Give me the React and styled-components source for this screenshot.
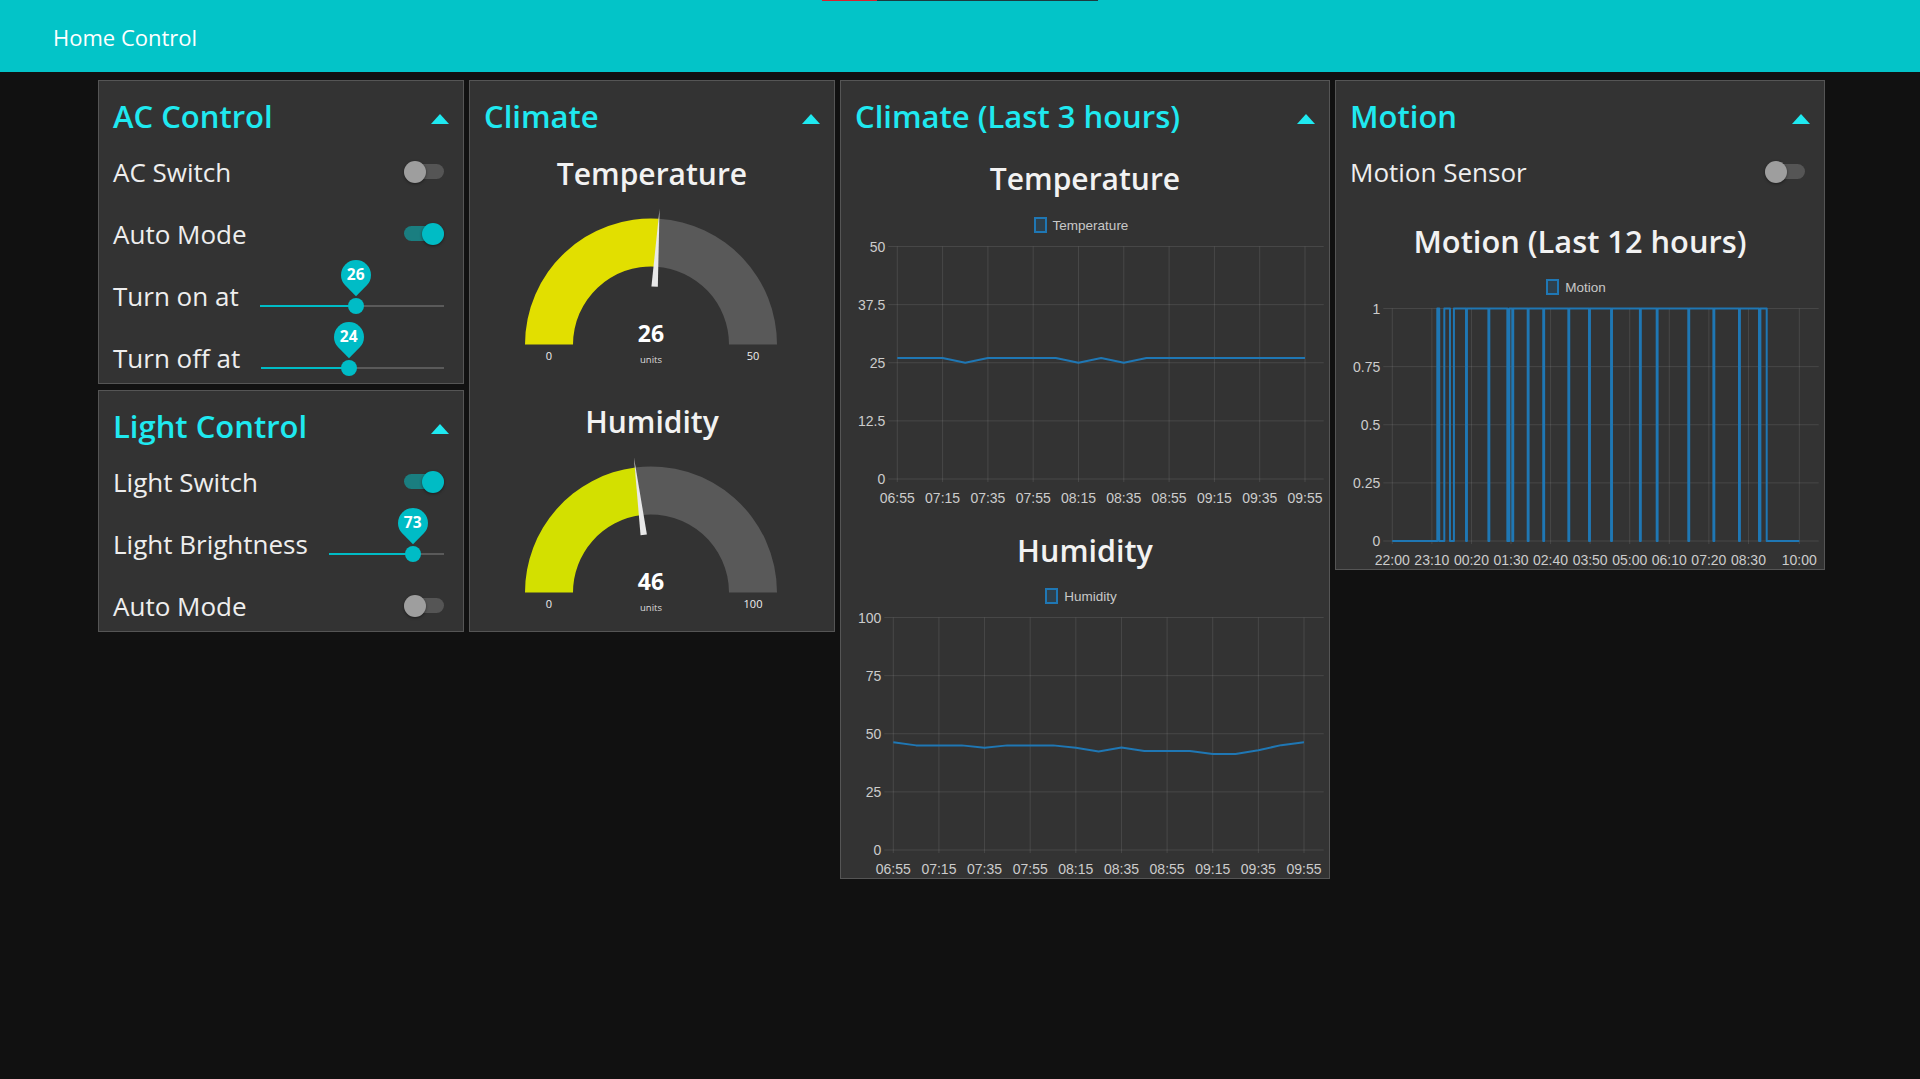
import React from "react";
import styled, { createGlobalStyle } from "styled-components";

const GlobalStyle = createGlobalStyle`
  html, body {
    margin: 0;
    padding: 0;
    background: #111111;
  }
  body {
    font-family: "Open Sans", "Noto Sans", sans-serif;
    color: #eeeeee;
  }
  * {
    box-sizing: border-box;
  }
`;

const Page = styled.div`
  min-height: 1079px;
  background: #111111;
`;

const TopBar = styled.header`
  position: relative;
  height: 72px;
  background: #03c4c8;
  display: flex;
  align-items: center;
  padding: 2px 0 0 53px;
  color: #ffffff;
  font-size: 22px;
`;

const Progress = styled.div`
  position: absolute;
  top: 0;
  left: 50%;
  transform: translateX(-50%);
  width: 276px;
  height: 1px;
  display: flex;
  background: #1d3b3f;
`;

const ProgressFill = styled.div`
  width: 55px;
  background: #d8232f;
`;

const Board = styled.main`
  display: flex;
  justify-content: center;
  align-items: flex-start;
  gap: 5px;
  padding: 8px 0 0 3px;
`;

const Column = styled.div`
  display: flex;
  flex-direction: column;
  gap: 6px;
  width: ${(p) => p.$w}px;
`;

const Card = styled.section`
  background: #333333;
  border: 1px solid #555555;
  padding-bottom: ${(p) => p.$pb}px;
`;

const GroupHeader = styled.div`
  height: 65px;
  padding: 6px 14px 0;
  display: flex;
  align-items: center;
  justify-content: space-between;
`;

const GroupTitle = styled.h2`
  margin: 0;
  font-size: 31px;
  font-weight: 600;
  line-height: 1;
  color: #1fe9f0;
`;

const Caret = styled.span`
  width: 0;
  height: 0;
  margin-top: 4px;
  border-left: 9.5px solid transparent;
  border-right: 9.5px solid transparent;
  border-bottom: 10px solid #1fe9f0;
`;

const Body = styled.div`
  display: flex;
  flex-direction: column;
  gap: 12px;
`;

const Row = styled.div`
  height: 50px;
  display: flex;
  align-items: center;
  padding: 1px 19px 0 14px;
  font-size: 26px;
  color: #eeeeee;
`;

const Label = styled.span`
  white-space: nowrap;
  line-height: 1;
`;

const Switch = styled.div`
  position: relative;
  margin-left: auto;
  width: 40px;
  height: 15px;
  border-radius: 8px;
  background: ${(p) => (p.$on ? "#1a7e80" : "#555555")};
`;

const Knob = styled.span`
  position: absolute;
  top: -3.5px;
  ${(p) => (p.$on ? "right: 0;" : "left: 0;")}
  width: 22px;
  height: 22px;
  border-radius: 50%;
  background: ${(p) => (p.$on ? "#00bcc5" : "#9e9e9e")};
  box-shadow: 0 1px 3px rgba(0, 0, 0, 0.45);
`;

const SliderArea = styled.div`
  flex: 1;
  align-self: stretch;
  margin-left: 21px;
  padding-top: 34px;
`;

const Rail = styled.div`
  position: relative;
  height: 2px;
  background: #5a5a5a;
`;

const RailFill = styled.div`
  position: absolute;
  left: 0;
  top: 0;
  bottom: 0;
  background: #00bcc6;
`;

const Thumb = styled.span`
  position: absolute;
  top: 1px;
  width: 16px;
  height: 16px;
  margin: -8px 0 0 -8px;
  border-radius: 50%;
  background: #00bcc6;
`;

const Pin = styled.span`
  position: absolute;
  top: -45px;
  width: 30px;
  height: 30px;
  margin-left: -15px;
  border-radius: 50% 50% 50% 0;
  transform: rotate(-45deg);
  background: #00bcc6;
  display: flex;
  align-items: center;
  justify-content: center;
`;

const PinText = styled.span`
  transform: rotate(45deg);
  font-size: 15.5px;
  font-weight: 700;
  color: #ffffff;
  line-height: 1;
`;

const GaugeBox = styled.div`
  height: 236px;
  display: flex;
  flex-direction: column;
  align-items: center;
`;

const WidgetTitle = styled.div`
  height: ${(p) => p.$h}px;
  line-height: ${(p) => p.$h}px;
  font-size: ${(p) => p.$size || 30}px;
  font-weight: 600;
  color: #f2f2f2;
  text-align: center;
  white-space: nowrap;
`;

const ChartBox = styled.div`
  height: 359px;
  display: flex;
  flex-direction: column;
`;

const Legend = styled.div`
  height: 26px;
  display: flex;
  justify-content: center;
  align-items: center;
  gap: 6px;
  padding-right: 8px;
  font-family: "Liberation Sans", Arial, sans-serif;
  font-size: 13.5px;
  color: #c8c8c8;
`;

const Swatch = styled.span`
  width: 13px;
  height: 16px;
  border: 2px solid #1f77b4;
  background: rgba(31, 119, 180, 0.2);
`;

const ChartSvg = styled.svg`
  display: block;
  font-family: "Liberation Sans", Arial, sans-serif;
  font-size: 14px;
`;

function Toggle({ on }) {
  return (
    <Switch $on={on}>
      <Knob $on={on} />
    </Switch>
  );
}

function Slider({ value, max }) {
  const pct = (value / max) * 100;
  return (
    <SliderArea>
      <Rail>
        <RailFill style={{ width: `${pct}%` }} />
        <Thumb style={{ left: `${pct}%` }} />
        <Pin style={{ left: `${pct}%` }}>
          <PinText>{value}</PinText>
        </Pin>
      </Rail>
    </SliderArea>
  );
}

function Group({ title, pb = 1, children }) {
  return (
    <Card $pb={pb}>
      <GroupHeader>
        <GroupTitle>{title}</GroupTitle>
        <Caret />
      </GroupHeader>
      <Body>{children}</Body>
    </Card>
  );
}

function Gauge({ title, value, max, color }) {
  const cx = 139;
  const cy = 142.5;
  const R = 126;
  const r = 78;
  const a = Math.PI * (1 - value / max);
  const pt = (rad) => [cx + rad * Math.cos(a), cy - rad * Math.sin(a)];
  const [ox, oy] = pt(R);
  const [ix, iy] = pt(r);
  const [tx, ty] = pt(136);
  const [bx, by] = pt(58);
  const sx = Math.sin(a) * 3.2;
  const sy = Math.cos(a) * 3.2;
  const fill = `M ${cx - R} ${cy} A ${R} ${R} 0 0 1 ${ox} ${oy} L ${ix} ${iy} A ${r} ${r} 0 0 0 ${cx - r} ${cy} Z`;
  const rest = `M ${ox} ${oy} A ${R} ${R} 0 0 1 ${cx + R} ${cy} L ${cx + r} ${cy} A ${r} ${r} 0 0 0 ${ix} ${iy} Z`;
  const needle = `M ${tx} ${ty} L ${bx + sx} ${by + sy} L ${bx - sx} ${by - sy} Z`;
  return (
    <GaugeBox>
      <WidgetTitle $h={56}>{title}</WidgetTitle>
      <svg width="280" height="180" viewBox="0 0 280 180">
        <path d={fill} fill={color} />
        <path d={rest} fill="#595959" />
        <path d={needle} fill="#e8e8e8" />
        <text x={cx} y="139.5" textAnchor="middle" fill="#ffffff" fontSize="23" fontWeight="700" fontFamily="Open Sans, sans-serif">
          {value}
        </text>
        <text x={cx} y="161" textAnchor="middle" fill="#dddddd" fontSize="9.5" fontFamily="Open Sans, sans-serif">
          units
        </text>
        <text x={cx - 102} y="158" textAnchor="middle" fill="#eeeeee" fontSize="11" fontFamily="Open Sans, sans-serif">
          0
        </text>
        <text x={cx + 102} y="158" textAnchor="middle" fill="#eeeeee" fontSize="11" fontFamily="Open Sans, sans-serif">
          {max}
        </text>
      </svg>
    </GaugeBox>
  );
}

const GRID = "rgba(255,255,255,0.1)";
const LINE = "#1f77b4";
const TOP = 8.5;
const BOTTOM = 241;
const RIGHT = 482.7;

function Chart({ title, titleSize, legend, left, yTicks, yMax, xTicks, path }) {
  const yOf = (v) => BOTTOM - (v / yMax) * (BOTTOM - TOP);
  return (
    <ChartBox>
      <WidgetTitle $h={66} $size={titleSize}>
        {title}
      </WidgetTitle>
      <Legend>
        <Swatch />
        {legend}
      </Legend>
      <ChartSvg width="488" height="267" viewBox="0 0 488 267">
        {yTicks.map((t) => (
          <g key={t.label}>
            <line x1={left - 9} x2={RIGHT} y1={yOf(t.v)} y2={yOf(t.v)} stroke={GRID} />
            <text x={left - 12} y={yOf(t.v) + 5} textAnchor="end" fill="#cccccc">
              {t.label}
            </text>
          </g>
        ))}
        {xTicks.map((t) => (
          <g key={t.label}>
            <line x1={t.x} x2={t.x} y1={TOP} y2={BOTTOM + 3} stroke={GRID} />
            <text x={t.x} y="265" textAnchor="middle" fill="#cccccc">
              {t.label}
            </text>
          </g>
        ))}
        <path d={path(yOf)} fill="none" stroke={LINE} strokeWidth="2" strokeLinejoin="round" />
      </ChartSvg>
    </ChartBox>
  );
}

const timeLabels = ["06:55", "07:15", "07:35", "07:55", "08:15", "08:35", "08:55", "09:15", "09:35", "09:55"];

function timeTicks(left, last) {
  const step = (last - left) / 9;
  return timeLabels.map((label, i) => ({ label, x: left + i * step }));
}

function seriesPath(values, left, last) {
  const step = (last - left) / 18;
  return (yOf) => values.map((v, i) => `${i ? "L" : "M"} ${left + i * step} ${yOf(v)}`).join(" ");
}

const temperature = [26, 26, 26, 25, 26, 26, 26, 26, 25, 26, 25, 26, 26, 26, 26, 26, 26, 26, 26];
const humidity = [46.3, 45, 45, 45, 44, 45, 45, 45, 44, 42.4, 44.1, 42.6, 42.6, 42.6, 41.3, 41.3, 42.9, 45.1, 46.3];

const MOTION_LEFT = 56.3;
const PER_MIN = 0.5653;
const motionLabels = ["22:00", "23:10", "00:20", "01:30", "02:40", "03:50", "05:00", "06:10", "07:20", "08:30"];
const motionTicks = [
  ...motionLabels.map((label, i) => ({ label, x: MOTION_LEFT + i * 70 * PER_MIN })),
  { label: "10:00", x: MOTION_LEFT + 720 * PER_MIN },
];

const motionSteps = (() => {
  const steps = [
    [79.6, 1],
    [83, 0],
    [92, 1],
    [102, 0],
    [109, 1],
    [662.3, 0],
  ];
  const dips = [
    [130.4, 1.6],
    [170, 1.6],
    [203.5, 3.5],
    [212.3, 1.6],
    [239.5, 1.6],
    [267, 1.6],
    [311.4, 1.6],
    [348, 1.6],
    [387, 1.6],
    [438, 1.6],
    [467.7, 1.6],
    [523.6, 1.6],
    [568, 1.6],
    [613.3, 1.6],
    [648.7, 2.4],
  ];
  dips.forEach(([t, w]) => steps.push([t, 0], [t + w, 1]));
  return steps.sort((a, b) => a[0] - b[0]);
})();

function motionPath(yOf) {
  const x = (t) => MOTION_LEFT + t * PER_MIN;
  let level = 0;
  let d = `M ${x(0)} ${yOf(0)}`;
  motionSteps.forEach(([t, v]) => {
    d += ` L ${x(t)} ${yOf(level)} L ${x(t)} ${yOf(v)}`;
    level = v;
  });
  return d + ` L ${x(720)} ${yOf(level)}`;
}

export default function App() {
  return (
    <Page>
      <GlobalStyle />
      <TopBar>
        <Progress>
          <ProgressFill />
        </Progress>
        Home Control
      </TopBar>
      <Board>
        <Column $w={366}>
          <Group title="AC Control">
            <Row>
              <Label>AC Switch</Label>
              <Toggle on={false} />
            </Row>
            <Row>
              <Label>Auto Mode</Label>
              <Toggle on />
            </Row>
            <Row>
              <Label>Turn on at</Label>
              <Slider value={26} max={50} />
            </Row>
            <Row>
              <Label>Turn off at</Label>
              <Slider value={24} max={50} />
            </Row>
          </Group>
          <Group title="Light Control">
            <Row>
              <Label>Light Switch</Label>
              <Toggle on />
            </Row>
            <Row>
              <Label>Light Brightness</Label>
              <Slider value={73} max={100} />
            </Row>
            <Row>
              <Label>Auto Mode</Label>
              <Toggle on={false} />
            </Row>
          </Group>
        </Column>
        <Column $w={366}>
          <Group title="Climate">
            <Gauge title="Temperature" value={26} max={50} color="#e2df00" />
            <Gauge title="Humidity" value={46} max={100} color="#d3e000" />
          </Group>
        </Column>
        <Column $w={490}>
          <Group title="Climate (Last 3 hours)" pb={2}>
            <Chart
              title="Temperature"
              legend="Temperature"
              left={56.3}
              yMax={50}
              yTicks={[
                { v: 50, label: "50" },
                { v: 37.5, label: "37.5" },
                { v: 25, label: "25" },
                { v: 12.5, label: "12.5" },
                { v: 0, label: "0" },
              ]}
              xTicks={timeTicks(56.3, 464)}
              path={seriesPath(temperature, 56.3, 464)}
            />
            <Chart
              title="Humidity"
              titleSize={30.5}
              legend="Humidity"
              left={52.3}
              yMax={100}
              yTicks={[
                { v: 100, label: "100" },
                { v: 75, label: "75" },
                { v: 50, label: "50" },
                { v: 25, label: "25" },
                { v: 0, label: "0" },
              ]}
              xTicks={timeTicks(52.3, 463)}
              path={seriesPath(humidity, 52.3, 463)}
            />
          </Group>
        </Column>
        <Column $w={490}>
          <Group title="Motion" pb={2}>
            <Row>
              <Label>Motion Sensor</Label>
              <Toggle on={false} />
            </Row>
            <Chart
              title="Motion (Last 12 hours)"
              titleSize={30.8}
              legend="Motion"
              left={MOTION_LEFT}
              yMax={1}
              yTicks={[
                { v: 1, label: "1" },
                { v: 0.75, label: "0.75" },
                { v: 0.5, label: "0.5" },
                { v: 0.25, label: "0.25" },
                { v: 0, label: "0" },
              ]}
              xTicks={motionTicks}
              path={motionPath}
            />
          </Group>
        </Column>
      </Board>
    </Page>
  );
}
